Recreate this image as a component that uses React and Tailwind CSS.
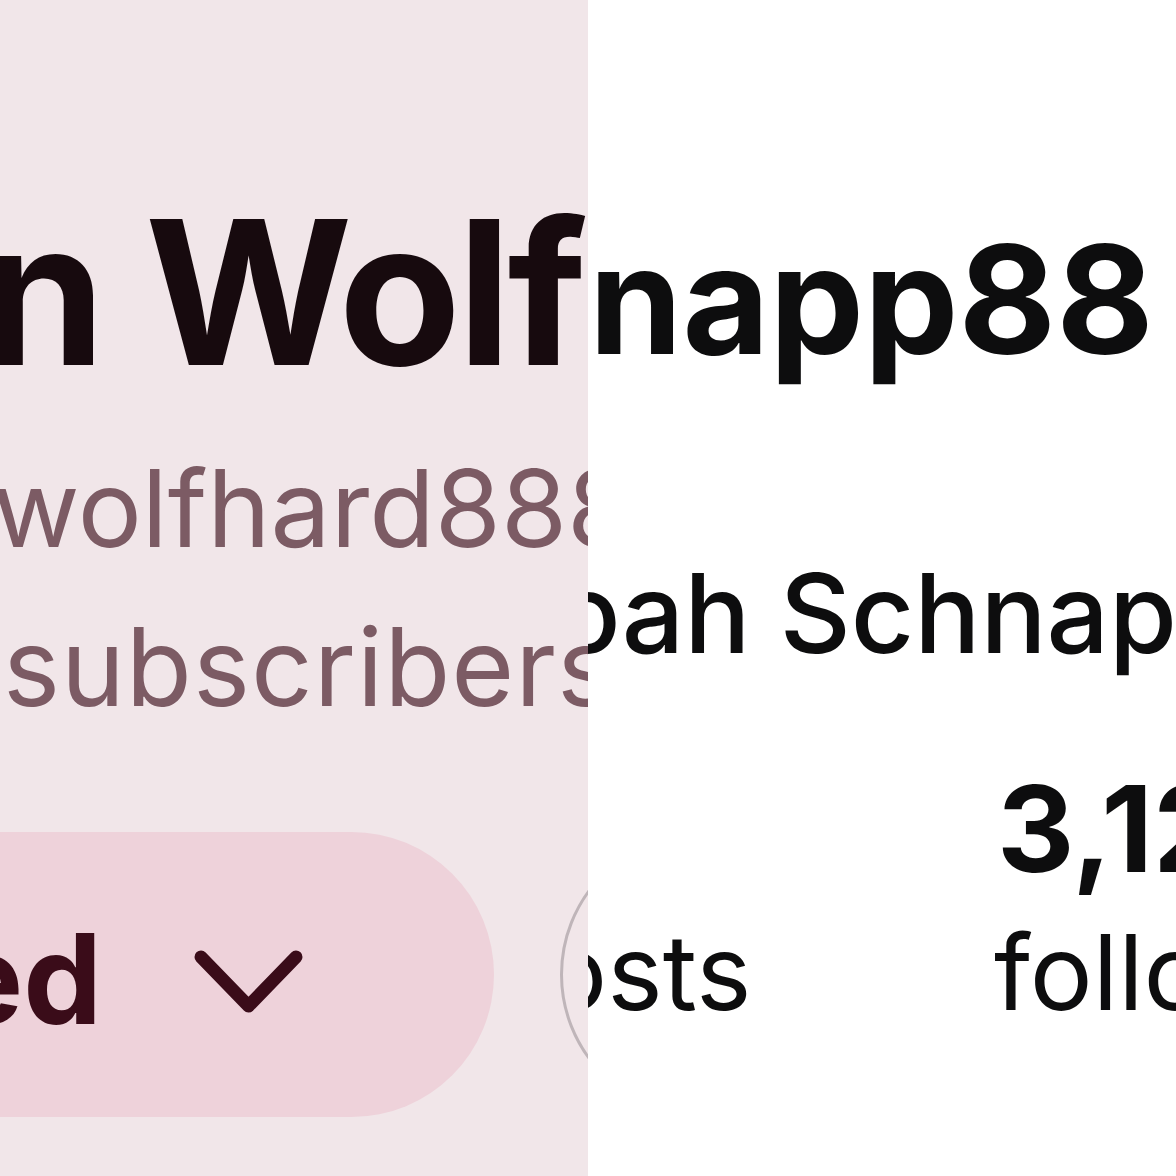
import React from "react"

function Chevron() {
  return (
    <svg className="mt-[14px] shrink-0" width="111" height="65" viewBox="0 0 111 65" fill="none">
      <path
        d="M8 8 L55.5 57 L103 8"
        stroke="#3a0c19"
        strokeWidth="13"
        strokeLinecap="round"
        strokeLinejoin="round"
      />
    </svg>
  )
}

function ChannelSide() {
  return (
    <div className="w-[588px] h-[1176px] shrink-0 overflow-hidden bg-[#f1e6e9]">
      <div className="mt-[192px] ml-[-303px] whitespace-nowrap text-[200px] font-bold leading-none tracking-[-4px] text-[#170a0e]">
        Finn Wolfhard
      </div>
      <div className="mt-[63px] ml-[-8px] whitespace-nowrap text-[107px] leading-none text-[#7c5b64]">
        wolfhard888
      </div>
      <div className="mt-[51px] ml-[3px] whitespace-nowrap text-[108px] leading-none tracking-[1px] text-[#7c5b64]">
        subscribers
      </div>
      <div className="mt-[111px] flex items-center">
        <div className="ml-[-260px] flex h-[285px] w-[754px] shrink-0 items-center justify-end gap-[91px] rounded-full bg-[#eed2da] pr-[190px]">
          <span className="shrink-0 whitespace-nowrap pt-[8px] text-[125px] font-bold leading-none text-[#3a0c19]">
            Subscribed
          </span>
          <Chevron />
        </div>
        <div className="ml-[66px] h-[285px] w-[285px] shrink-0 rounded-full border-[3px] border-[#bfb5b9]" />
      </div>
    </div>
  )
}

function ProfileSide() {
  return (
    <div className="w-[588px] h-[1176px] shrink-0 overflow-hidden bg-white text-[#0d0d0e]">
      <div className="mt-[225px] ml-[1px] whitespace-nowrap text-[150px] font-bold leading-none">
        napp88
      </div>
      <div className="mt-[183px] ml-[-117px] whitespace-nowrap text-[110px] font-medium leading-none">
        Noah Schnapp
      </div>
      <div className="mt-[101px] flex">
        <div className="ml-[-108px] w-[514px] shrink-0">
          <div className="h-[120px]" />
          <div className="mt-[30px] text-[105px] leading-none">posts</div>
        </div>
        <div className="shrink-0 whitespace-nowrap">
          <div className="ml-[3px] text-[120px] font-bold leading-none">3,124</div>
          <div className="mt-[30px] text-[105px] leading-none">followers</div>
        </div>
      </div>
    </div>
  )
}

export default function App() {
  return (
    <div className="flex h-[1176px] w-[1176px] overflow-hidden font-['Inter',sans-serif]">
      <ChannelSide />
      <ProfileSide />
    </div>
  )
}
